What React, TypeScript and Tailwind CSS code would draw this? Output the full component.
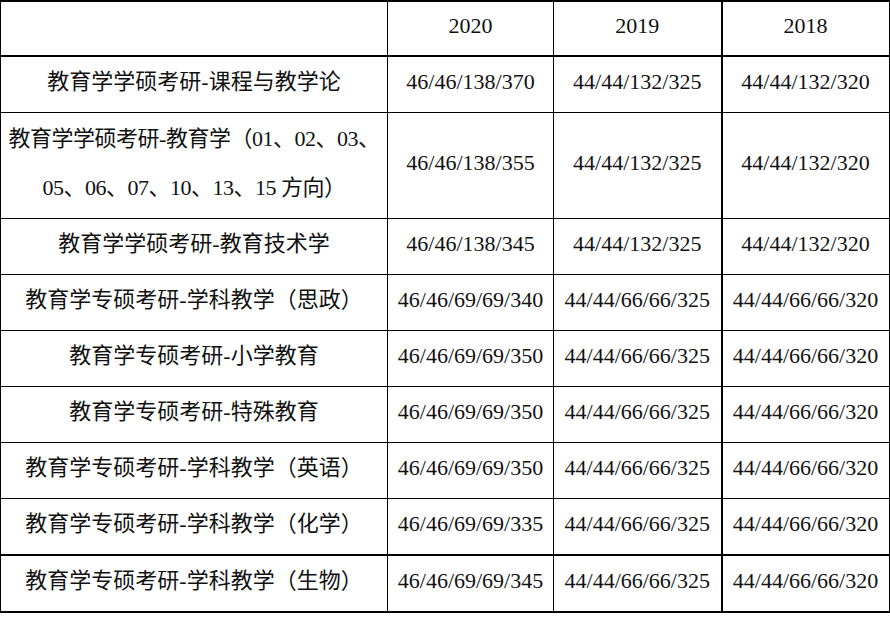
import React from 'react';

const rows: { name: React.ReactNode; tall?: boolean; v: [string, string, string]; thickTop?: boolean }[] = [
    { name: '教育学学硕考研-课程与教学论', v: ['46/46/138/370', '44/44/132/325', '44/44/132/320'] },
    {
        name: (
            <>
                教育学学硕考研-教育学（01、02、03、
                <br />
                05、06、07、10、13、15 方向）
            </>
        ),
        tall: true,
        v: ['46/46/138/355', '44/44/132/325', '44/44/132/320'],
    },
    { name: '教育学学硕考研-教育技术学', v: ['46/46/138/345', '44/44/132/325', '44/44/132/320'] },
    { name: '教育学专硕考研-学科教学（思政）', v: ['46/46/69/69/340', '44/44/66/66/325', '44/44/66/66/320'] },
    { name: '教育学专硕考研-小学教育', v: ['46/46/69/69/350', '44/44/66/66/325', '44/44/66/66/320'] },
    { name: '教育学专硕考研-特殊教育', v: ['46/46/69/69/350', '44/44/66/66/325', '44/44/66/66/320'] },
    { name: '教育学专硕考研-学科教学（英语）', v: ['46/46/69/69/350', '44/44/66/66/325', '44/44/66/66/320'] },
    { name: '教育学专硕考研-学科教学（化学）', v: ['46/46/69/69/335', '44/44/66/66/325', '44/44/66/66/320'] },
    { name: '教育学专硕考研-学科教学（生物）', v: ['46/46/69/69/345', '44/44/66/66/325', '44/44/66/66/320'], thickTop: true },
];

const font = { fontFamily: '"Liberation Serif", "Noto Sans CJK SC", serif' };

const App: React.FC = () => {
    return (
        <div className="w-[890px] h-[621px] bg-white overflow-hidden text-[#111] text-[22px]" style={font}>
            <table className="table-fixed border-collapse w-[889px] border-t-2 border-b-2 border-l border-r-2 border-black">
                <colgroup>
                    <col className="w-[387px]" />
                    <col className="w-[166px]" />
                    <col className="w-[168px]" />
                    <col className="w-[168px]" />
                </colgroup>
                <thead>
                    <tr className="h-[55px] border-b-2 border-black">
                        <th className="font-normal border-r border-black"></th>
                        <th className="font-normal border-r border-black text-center p-0 pb-[6px]">2020</th>
                        <th className="font-normal border-r-2 border-black text-center p-0 pb-[6px]">2019</th>
                        <th className="font-normal text-center p-0 pb-[6px]">2018</th>
                    </tr>
                </thead>
                <tbody>
                    {rows.map((r, i) => (
                        <tr
                            key={i}
                            className={`${r.tall ? 'h-[106px]' : 'h-[56px]'} ${r.thickTop ? 'border-t-2' : 'border-t'} border-black`}
                        >
                            <td
                                className={`border-r border-black text-center leading-[49px] p-0 pb-[6px] whitespace-nowrap ${r.tall ? 'tracking-[-0.5px]' : ''}`}
                            >
                                {r.name}
                            </td>
                            <td className="border-r border-black text-center p-0 pb-[6px]">{r.v[0]}</td>
                            <td className="border-r-2 border-black text-center p-0 pb-[6px]">{r.v[1]}</td>
                            <td className="text-center p-0 pb-[6px]">{r.v[2]}</td>
                        </tr>
                    ))}
                </tbody>
            </table>
        </div>
    );
};

export default App;
